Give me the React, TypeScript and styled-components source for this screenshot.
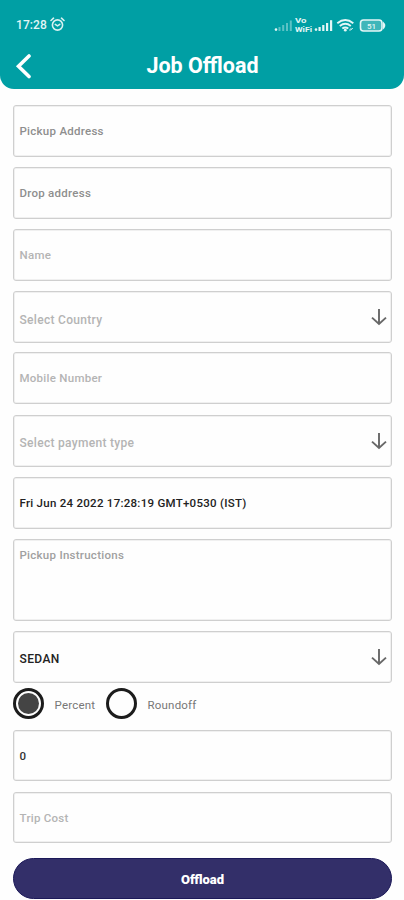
import React from "react";
import styled, { createGlobalStyle } from "styled-components";

const Global = createGlobalStyle`
  * { box-sizing: border-box; }
  body { margin: 0; background: #fefefe; font-family: Roboto, "Liberation Sans", sans-serif; }
`;

const Screen = styled.div`
  width: 404px;
  height: 900px;
  overflow: hidden;
  background: #fefefe;
`;

const Header = styled.header`
  height: 89px;
  background: #009fa4;
  border-radius: 0 0 14px 14px;
  color: #fff;
`;

const StatusBar = styled.div`
  height: 43px;
  padding: 6px 16px 0 16px;
  display: flex;
  align-items: center;
  justify-content: space-between;
`;

const Clock = styled.div`
  display: flex;
  align-items: center;
  gap: 3px;
  font-size: 12px;
  font-weight: 500;
  letter-spacing: 0.1px;
  color: #e2f5f5;
`;

const StatusIcons = styled.svg`
  display: block;
`;

const TitleBar = styled.div`
  height: 46px;
  display: grid;
  grid-template-columns: 40px 1fr 40px;
  align-items: center;
`;

const BackIcon = styled.svg`
  margin-left: 14px;
`;

const Title = styled.h1`
  margin: 0;
  padding-left: 1px;
  text-align: center;
  font-size: 21.5px;
  line-height: 44px;
  font-weight: 700;
`;

const Form = styled.main`
  padding: 16px 12px 0 13px;
  display: flex;
  flex-direction: column;
`;

const Field = styled.div<{ $height?: number; $gap?: number; $top?: boolean }>`
  height: ${(p) => p.$height ?? 52}px;
  margin-bottom: ${(p) => p.$gap ?? 10}px;
  flex: none;
  display: flex;
  justify-content: space-between;
  align-items: ${(p) => (p.$top ? "flex-start" : "center")};
  padding: ${(p) => (p.$top ? "7px" : "0")} 4px 0 5.5px;
  border: 1px solid #cfcfcf;
  box-shadow: inset 0 0 0 1px #f0f0f0;
  border-radius: 3px;
`;

const Label = styled.span<{ $color?: string; $track?: number; $drop?: number; $size?: number }>`
  color: ${(p) => p.$color ?? "#b4b4b4"};
  font-size: ${(p) => p.$size ?? 11.5}px;
  line-height: 16px;
  font-weight: 500;
  letter-spacing: ${(p) => p.$track ?? 0.27}px;
  padding-top: ${(p) => p.$drop ?? 0}px;
  white-space: nowrap;
`;

const ArrowIcon = styled.svg`
  flex: none;
`;

const RadioRow = styled.div`
  height: 31px;
  margin: 0 0 11px;
  display: flex;
  align-items: center;
`;

const Radio = styled.span`
  width: 31px;
  height: 31px;
  display: grid;
  place-items: center;
  border: 3px solid #1c1c1c;
  border-radius: 50%;
`;

const RadioDot = styled.span`
  width: 21px;
  height: 21px;
  border-radius: 50%;
  background: #444;
`;

const RadioLabel = styled.span<{ $width: number }>`
  width: ${(p) => p.$width}px;
  padding: 2px 0 0 10.5px;
  color: #777;
  font-size: 11.5px;
  letter-spacing: 0.2px;
`;

const Submit = styled.button`
  height: 41px;
  margin-top: 5px;
  border: 1px solid #1c1959;
  border-radius: 21px;
  background: #332f69;
  color: #fff;
  font: 900 13px/38px Roboto, sans-serif;
  padding: 2px 0 0;
`;

const Arrow = () => (
  <ArrowIcon width="16" height="18" viewBox="0 0 16 18" fill="none" stroke="#686868" strokeWidth="1.9">
    <path d="M8 1v15M1 9.6l7 6.4 7-6.4" />
  </ArrowIcon>
);

const Alarm = () => (
  <svg width="15" height="15" viewBox="0 0 15 15" fill="none" stroke="#d8f1f1" strokeWidth="1.6" strokeLinecap="round">
    <circle cx="7.5" cy="8" r="5.1" />
    <path d="M1 3.5 3.5 1.2M14 3.5 11.5 1.2M5.3 7.4l2.2 1.5 2.3-1.6" />
  </svg>
);

export default function App() {
  return (
    <Screen>
      <Global />
      <Header>
        <StatusBar>
          <Clock>
            17:28
            <Alarm />
          </Clock>
          <StatusIcons width="114" height="18" viewBox="0 0 114 18" fill="#e4f6f6">
            <circle cx="2" cy="13.6" r="1.3" />
            <g fill="#5cc2c5">
              <rect x="4.5" y="11" width="2" height="4" />
              <rect x="8.2" y="9" width="2" height="6" />
              <rect x="12" y="7" width="2" height="8" />
              <rect x="15.8" y="4.5" width="2" height="10.5" />
            </g>
            <text x="21" y="7" fontSize="7" fontWeight="700" textLength="11.5" lengthAdjust="spacingAndGlyphs">Vo</text>
            <text x="21" y="15.8" fontSize="7" fontWeight="700" textLength="17" lengthAdjust="spacingAndGlyphs">WiFi</text>
            <circle cx="42" cy="13.6" r="1.3" />
            <rect x="44.5" y="11" width="2.2" height="4" />
            <rect x="48.2" y="9" width="2.2" height="6" />
            <rect x="52" y="7" width="2.2" height="8" />
            <rect x="56" y="4.2" width="2.2" height="10.8" />
            <g fill="none" stroke="#e4f6f6" strokeWidth="1.9">
              <path d="M63.3 7.2q8-6.5 16 0M65.8 10q5.5-4.4 11 0M68.3 12.6q3-2.4 6 0" />
            </g>
            <circle cx="71.3" cy="14.2" r="1.4" />
            <path d="M75 14h2v-2M77 14l2-2" stroke="#b5e3e4" fill="none" />
            <rect x="86.5" y="4" width="21.5" height="11" rx="3" fill="#3fb6ba" stroke="#e4f6f6" strokeWidth="1.6" />
            <path d="M109 5.5q4.5 4 0 8z" />
            <text x="93" y="12.5" fontSize="8" fontWeight="500">51</text>
          </StatusIcons>
        </StatusBar>
        <TitleBar>
          <BackIcon width="20" height="26" viewBox="0 0 20 26" fill="none" stroke="#fff" strokeWidth="3.6" strokeLinecap="round">
            <path d="M15 3 4.5 13.3l10.5 10.2" />
          </BackIcon>
          <Title>Job Offload</Title>
        </TitleBar>
      </Header>
      <Form>
        <Field><Label $color="#8e8e8e">Pickup Address</Label></Field>
        <Field><Label $color="#8e8e8e">Drop address</Label></Field>
        <Field><Label>Name</Label></Field>
        <Field $gap={9}><Label $drop={6} $size={12} $track={0.3}>Select Country</Label><Arrow /></Field>
        <Field $gap={11}><Label>Mobile Number</Label></Field>
        <Field><Label $drop={3} $size={12} $track={0.3}>Select payment type</Label><Arrow /></Field>
        <Field><Label $color="#222">Fri Jun 24 2022 17:28:19 GMT+0530 (IST)</Label></Field>
        <Field $height={82} $top><Label $color="#a0a0a0">Pickup Instructions</Label></Field>
        <Field $gap={5}><Label $color="#222" $drop={4} $size={12} $track={0.4}>SEDAN</Label><Arrow /></Field>
        <RadioRow>
          <Radio><RadioDot /></Radio>
          <RadioLabel $width={62}>Percent</RadioLabel>
          <Radio />
          <RadioLabel $width={70}>Roundoff</RadioLabel>
        </RadioRow>
        <Field $height={51} $gap={11}><Label $color="#333">0</Label></Field>
        <Field $height={51}><Label>Trip Cost</Label></Field>
        <Submit>Offload</Submit>
      </Form>
    </Screen>
  );
}
